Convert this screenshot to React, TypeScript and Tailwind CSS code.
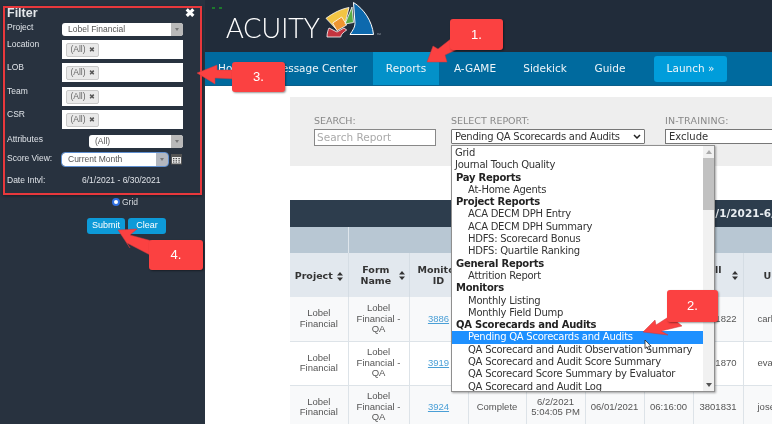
import React from "react";

const sans = "font-['Liberation_Sans',Arial,sans-serif]";
const verd = "font-['DejaVu_Sans',Verdana,sans-serif]";

function Arrow({ points }: { points: string }) {
  return (
    <svg className="absolute left-0 top-0" viewBox="0 0 772 424" width="772" height="424">
      <polygon points={points} fill="#fb4141" stroke="#c8393c" strokeWidth="0.5" />
    </svg>
  );
}

function Callout({ className, label }: { className: string; label: string }) {
  return (
    <div className={`absolute ${className} flex items-center justify-center rounded-[3px] bg-[#fb4141] text-white text-[13px] shadow-[1px_1px_2px_rgba(0,0,0,0.4)] ${sans}`}>
      {label}
    </div>
  );
}

function Logo() {
  return (
    <div className="absolute left-[226px] top-0">
      <span className="absolute left-0 top-[11px] text-[27px] leading-[34px] font-light text-white font-['Lato',sans-serif]">ACUITY</span>
      <svg width="65" height="45" viewBox="0 0 65 45" className="absolute left-[94px] top-0">
        <path d="M33.5 2.5 C44 9 52 21 53.5 34.5 L30 34.5 C33 30 35 27 35 23.5 Z" fill="#0d69ad" stroke="#fff" strokeWidth="1" />
        <path d="M6 18.3 C13 13 21 9 29 7.5 L25 24 L17 30 Z" fill="#f2c544" stroke="#fff" strokeWidth="0.8" />
        <path d="M12.7 23 L21.7 17 L26.7 25 L17 30.7 Z" fill="#ee9530" stroke="#fff" strokeWidth="0.8" />
        <path d="M32 7 L33.5 22.5 L25 24 Z" fill="#58ac46" stroke="#fff" strokeWidth="0.8" />
        <path d="M7 37 C7 33 8 30 9 28 L17 32 L24 28 L26.7 30 C24 32 21 34 20.7 37 Z" fill="#c4343f" stroke="#fff" strokeWidth="0.8" />
      </svg>
      <span className="absolute left-[151px] top-[32px] text-[5px] leading-[6px] text-[#9aa2ab]">™</span>
    </div>
  );
}

function Tag() {
  return (
    <div className="h-[19px] bg-white flex items-center pl-[4px] w-[121px]">
      <span className="h-[14px] w-[33px] rounded-[2px] border border-[#c9c9c9] bg-[#e9e9e9] text-[#666] text-[8.5px] flex items-center justify-center gap-[3px]">
        (All) <span className="text-[#555] text-[7px] leading-none">✖</span>
      </span>
    </div>
  );
}

function Row({ label, children, className = "" }: { label: string; children: React.ReactNode; className?: string }) {
  return (
    <div className={`flex justify-between ${className}`}>
      <span className="-mt-[1px] text-[#dfe3e8] text-[8.5px] leading-[10px]">{label}</span>
      {children}
    </div>
  );
}

function Select({ value, w, chev = "bg-[#b9b9b9]", focus = false }: { value: string; w: string; chev?: string; focus?: boolean }) {
  return (
    <div className={`h-[13px] ${w} bg-white rounded-[3px] flex items-center justify-between overflow-hidden ${focus ? "outline outline-1 outline-[#5f8fd0]" : ""}`}>
      <span className="pl-[6px] text-[#555] text-[8.5px]">{value}</span>
      <span className={`w-[12px] h-full ${chev} flex items-center justify-center`}>
        <span className="w-0 h-0 border-l-[2px] border-r-[2px] border-t-[3px] border-l-transparent border-r-transparent border-t-[#777]" />
      </span>
    </div>
  );
}

function Sidebar() {
  return (
    <aside className={`w-[205px] h-full shrink-0 bg-[#28323f] flex flex-col items-start ${sans}`}>
      <div className="w-[199px] h-[189px] mt-[6px] ml-[3px] border-2 border-[#e8383c] pl-[2px] pr-[17px] flex flex-col shadow-[0_1px_3px_rgba(0,0,0,0.4)]">
        <div className="flex justify-between items-center h-[9px]">
          <span className="font-bold text-[#e4e7ea] text-[12.5px] leading-[12px]">Filter</span>
          <span className="text-white text-[12px] font-bold leading-[12px] -mr-[12px]">✖</span>
        </div>
        <Row label="Project" className="mt-[6px]"><Select value="Lobel Financial" w="w-[121px]" /></Row>
        <Row label="Location" className="mt-[4px]"><Tag /></Row>
        <Row label="LOB" className="mt-[4px]"><Tag /></Row>
        <Row label="Team" className="mt-[5px]"><Tag /></Row>
        <Row label="CSR" className="mt-[4px]"><Tag /></Row>
        <Row label="Attributes" className="mt-[6px]"><Select value="(All)" w="w-[94px]" /></Row>
        <div className="flex mt-[5px]">
          <span className="w-[55px] text-[#dfe3e8] text-[8.5px] leading-[10px]">Score View:</span>
          <Select value="Current Month" w="w-[106px]" chev="bg-[#b3b7bf]" focus />
          <svg width="12" height="11" viewBox="0 0 12 11" className="ml-[3px] mt-[1px] shrink-0">
            <rect x="0.5" y="0.5" width="10" height="9.5" fill="#e8e8e8" stroke="#555" />
            <rect x="0.5" y="0.5" width="10" height="2.5" fill="#555" />
            <path d="M2 4.5h1.4M4.6 4.5H6M7.4 4.5h1.4M2 6.3h1.4M4.6 6.3H6M7.4 6.3h1.4M2 8.1h1.4M4.6 8.1H6M7.4 8.1h1.4" stroke="#444" />
          </svg>
        </div>
        <div className="flex mt-[9px] text-[#dfe3e8] text-[8.5px] leading-[10px]">
          <span className="w-[75px]">Date Intvl:</span>
          <span>6/1/2021 - 6/30/2021</span>
        </div>
      </div>
      <div className="mt-[2px] ml-[112px] h-[10px] flex items-center gap-[2px] text-[#d5d9de] text-[8.5px]">
        <span className="w-[8px] h-[8px] rounded-full bg-white border-[2px] border-[#2f6fe0]" />
        Grid
      </div>
      <div className="mt-[11px] ml-[87px] flex gap-[3px] text-white text-[9px]">
        <span className="w-[38px] h-[16px] rounded-[3px] bg-[#0d9ad8] flex items-center justify-center">Submit</span>
        <span className="w-[38px] h-[16px] rounded-[3px] bg-[#0d9ad8] flex items-center justify-center">Clear</span>
      </div>
    </aside>
  );
}

const navItems = [
  ["Home", "w-[52px] pl-[13px]"],
  ["Message Center", "w-[116px] justify-center"],
  ["Reports", "w-[66px] justify-center bg-[#0391c9]"],
  ["A-GAME", "w-[72px] justify-center"],
  ["Sidekick", "w-[68px] justify-center"],
  ["Guide", "w-[62px] justify-center"],
];

const rows = [
  { id: "3886", status: "", dt: ["", ""], d: "", t: "", call: "3801822", u: "carl" },
  { id: "3919", status: "", dt: ["", ""], d: "", t: "", call: "3801870", u: "eva" },
  { id: "3924", status: "Complete", dt: ["6/2/2021", "5:04:05 PM"], d: "06/01/2021", t: "06:16:00", call: "3801831", u: "jose" },
];

function SortIcon() {
  return (
    <svg width="6" height="9" viewBox="0 0 6 9" className="inline-block ml-[4px] shrink-0">
      <path d="M3 0 L6 3.6 H0 Z M3 9 L0 5.4 H6 Z" fill="#333" />
    </svg>
  );
}

const dropdown: [string, string][] = [
  ["Grid", "i"],
  ["Journal Touch Quality", "i"],
  ["Pay Reports", "h"],
  ["At-Home Agents", "c"],
  ["Project Reports", "h"],
  ["ACA DECM DPH Entry", "c"],
  ["ACA DECM DPH Summary", "c"],
  ["HDFS: Scorecard Bonus", "c"],
  ["HDFS: Quartile Ranking", "c"],
  ["General Reports", "h"],
  ["Attrition Report", "c"],
  ["Monitors", "h"],
  ["Monthly Listing", "c"],
  ["Monthly Field Dump", "c"],
  ["QA Scorecards and Audits", "h"],
  ["Pending QA Scorecards and Audits", "s"],
  ["QA Scorecard and Audit Observation Summary", "c"],
  ["QA Scorecard and Audit Score Summary", "c"],
  ["QA Scorecard Score Summary by Evaluator", "c"],
  ["QA Scorecard and Audit Log", "c"],
];

function Dropdown() {
  return (
    <div className={`absolute left-[451px] top-[145px] w-[264px] h-[247px] bg-white border border-[#8f8f8f] shadow-[1px_1px_2px_rgba(0,0,0,0.35)] flex text-[10px] tracking-[-0.25px] leading-[12.3px] text-[#333] ${verd}`}>
      <div className="flex-1 pt-[1px] overflow-hidden">
        {dropdown.map(([t, k]) => (
          <div
            key={t}
            className={`h-[12.3px] whitespace-nowrap ${
              k === "i" ? "pl-[3px]" : k === "h" ? "pl-[4px] font-bold text-[#222]" : k === "s" ? "pl-[16px] bg-[#1e90ff] text-white" : "pl-[16px]"
            }`}
          >
            {t}
          </div>
        ))}
      </div>
      <div className="w-[11px] h-full bg-[#f1f1f1] flex flex-col items-center justify-between py-[4px] relative">
        <span className="w-0 h-0 border-l-[3px] border-r-[3px] border-b-[4px] border-l-transparent border-r-transparent border-b-[#aaa]" />
        <span className="absolute top-[12px] left-0 w-full h-[52px] bg-[#c1c1c1]" />
        <span className="w-0 h-0 border-l-[3px] border-r-[3px] border-t-[4px] border-l-transparent border-r-transparent border-t-[#555]" />
      </div>
    </div>
  );
}

function Main() {
  return (
    <main className={`flex-1 h-full min-w-0 flex flex-col bg-white overflow-hidden ${verd}`}>
      <div className="h-[52px] shrink-0 bg-[#212c3a]" />
      <nav className="h-[34px] shrink-0 bg-[#006a9e] flex items-stretch text-[#eef5f9] text-[10.5px] border-b border-[#0b5f8b]">
        {navItems.map(([t, c]) => (
          <span key={t} className={`flex items-center ${c}`}>{t}</span>
        ))}
        <span className="ml-[13px] mt-[4px] mb-[3px] w-[73px] rounded-[3px] bg-[#009ddb] flex items-center justify-center">Launch »</span>
      </nav>
      <div className="pl-[85px] pt-[11px] flex-1 min-h-0 flex flex-col">
        <div className="h-[69px] shrink-0 bg-[#eeeeee] pl-[24px] pt-[18px] flex text-[9.5px] text-[#888]">
          <div className="w-[137px]">
            <div className="leading-[12px]">SEARCH:</div>
            <div className="mt-[2px] w-[122px] h-[17px] border border-[#888] bg-white pl-[2px] text-[10.5px] leading-[15px] text-[#aaa]">Search Report</div>
          </div>
          <div className="w-[214px]">
            <div className="leading-[12px]">SELECT REPORT:</div>
            <div className="mt-[2px] w-[194px] h-[15px] border border-[#777] bg-white pl-[3px] pr-[3px] flex justify-between items-center text-[10px] tracking-[-0.25px] text-[#333] rounded-[1px]">
              <span>Pending QA Scorecards and Audits</span>
              <svg width="8" height="5" viewBox="0 0 8 5"><path d="M1 1 L4 4 L7 1" stroke="#222" strokeWidth="1.5" fill="none" /></svg>
            </div>
          </div>
          <div className="flex-1">
            <div className="leading-[12px] tracking-[0.2px]">IN-TRAINING:</div>
            <div className="mt-[2px] h-[15px] border border-[#777] border-r-0 bg-white pl-[3px] flex items-center text-[10px] text-[#333]">Exclude</div>
          </div>
        </div>
        <div className="h-[34px] shrink-0" />
        <div className="h-[27px] shrink-0 bg-[#2d3d4d] flex items-center pl-[418px] text-[#e8edf1] text-[10.5px] font-bold overflow-hidden whitespace-nowrap">
          <span>6/1/2021-6/30/2021</span>
        </div>
        <table className={`table-fixed w-[482px] border-collapse text-center text-[9.5px] leading-[10.5px] text-[#555] ${sans}`}>
          <colgroup>
            <col className="w-[58px]" />
            <col className="w-[61px]" />
            <col className="w-[59px]" />
            <col className="w-[58px]" />
            <col className="w-[59px]" />
            <col className="w-[59px]" />
            <col className="w-[49px]" />
            <col className="w-[50px]" />
            <col className="w-[29px]" />
          </colgroup>
          <thead>
            <tr className="h-[26px] bg-[#b8c7d3]">
              <th className="border-r border-[#dfe6ec]"></th>
              <th colSpan={8}></th>
            </tr>
            <tr className={`h-[44px] bg-[#e2e8ee] text-[#333] text-[9.5px] leading-[11px] ${verd}`}>
              <th className="border-r border-[#d5dde4]">Project<SortIcon /></th>
              <th className="border-r border-[#d5dde4]">
                <span className="flex items-center justify-between pl-[12px] pr-[4px]"><span>Form<br />Name</span><SortIcon /></span>
              </th>
              <th className="border-r border-[#d5dde4]">Monitor<br />ID</th>
              <th className="border-r border-[#d5dde4]"></th>
              <th className="border-r border-[#d5dde4]"></th>
              <th className="border-r border-[#d5dde4]"></th>
              <th className="border-r border-[#d5dde4]"></th>
              <th className="border-r border-[#d5dde4]">
                <span className="flex items-center justify-between pl-[8px] pr-[5px] text-left"><span>Call<br />ID</span><SortIcon /></span>
              </th>
              <th className="text-left pl-[20px]">U</th>
            </tr>
          </thead>
          <tbody>
            {rows.map((r, i) => (
              <tr key={r.id} className={`h-[44px] border-b border-[#dde3e8] ${i % 2 === 0 ? "bg-[#f8f9fa]" : "bg-white"}`}>
                <td className="border-r border-[#dde3e8]">Lobel<br />Financial</td>
                <td className="border-r border-[#dde3e8]">Lobel<br />Financial -<br />QA</td>
                <td className="border-r border-[#dde3e8]"><span className="text-[#4a9fd6] underline">{r.id}</span></td>
                <td className="border-r border-[#dde3e8]">{r.status}</td>
                <td className="border-r border-[#dde3e8]">{r.dt[0]}<br />{r.dt[1]}</td>
                <td className="border-r border-[#dde3e8]">{r.d}</td>
                <td className="border-r border-[#dde3e8]">{r.t}</td>
                <td className="border-r border-[#dde3e8]">{r.call}</td>
                <td className="text-left pl-[14px] whitespace-nowrap overflow-hidden">{r.u}</td>
              </tr>
            ))}
          </tbody>
        </table>
      </div>
    </main>
  );
}

export default function App() {
  return (
    <div className="relative w-[772px] h-[424px] overflow-hidden flex bg-white blur-[0.35px]">
      <Sidebar />
      <Main />
      <Logo />
      <div className="absolute left-[212px] top-[7px] flex gap-[4px]">
        <span className="w-[3px] h-[2px] bg-[#1d7a2c]" />
        <span className="w-[3px] h-[2px] bg-[#1d7a2c]" />
      </div>
      <Dropdown />
      <svg width="8" height="12" viewBox="0 0 8 12" className="absolute left-[644px] top-[339px]">
        <path d="M1 1 L1 9.5 L3 7.8 L4.5 11 L6 10.3 L4.6 7.3 L7 7.2 Z" fill="#fff" stroke="#222" strokeWidth="0.8" />
      </svg>
      <Arrow points="427,62 433,46 438,49 452,38 460,48 445,55 447,62" />
      <Callout className="left-[450px] top-[19px] w-[53px] h-[31px]" label="1." />
      <Arrow points="643,332 655,320 656,325 670,316 682,326 661,331 668,335" />
      <Callout className="left-[667px] top-[290px] w-[51px] h-[32px]" label="2." />
      <Arrow points="197,73 217,65 217,70 235,70 235,79 215,78 215,84" />
      <Callout className="left-[232px] top-[62px] w-[53px] h-[30px]" label="3." />
      <Arrow points="118,230 137,229 130,235 152,241 152,256 127,243 130,248" />
      <Callout className="left-[149px] top-[240px] w-[54px] h-[30px]" label="4." />
    </div>
  );
}
